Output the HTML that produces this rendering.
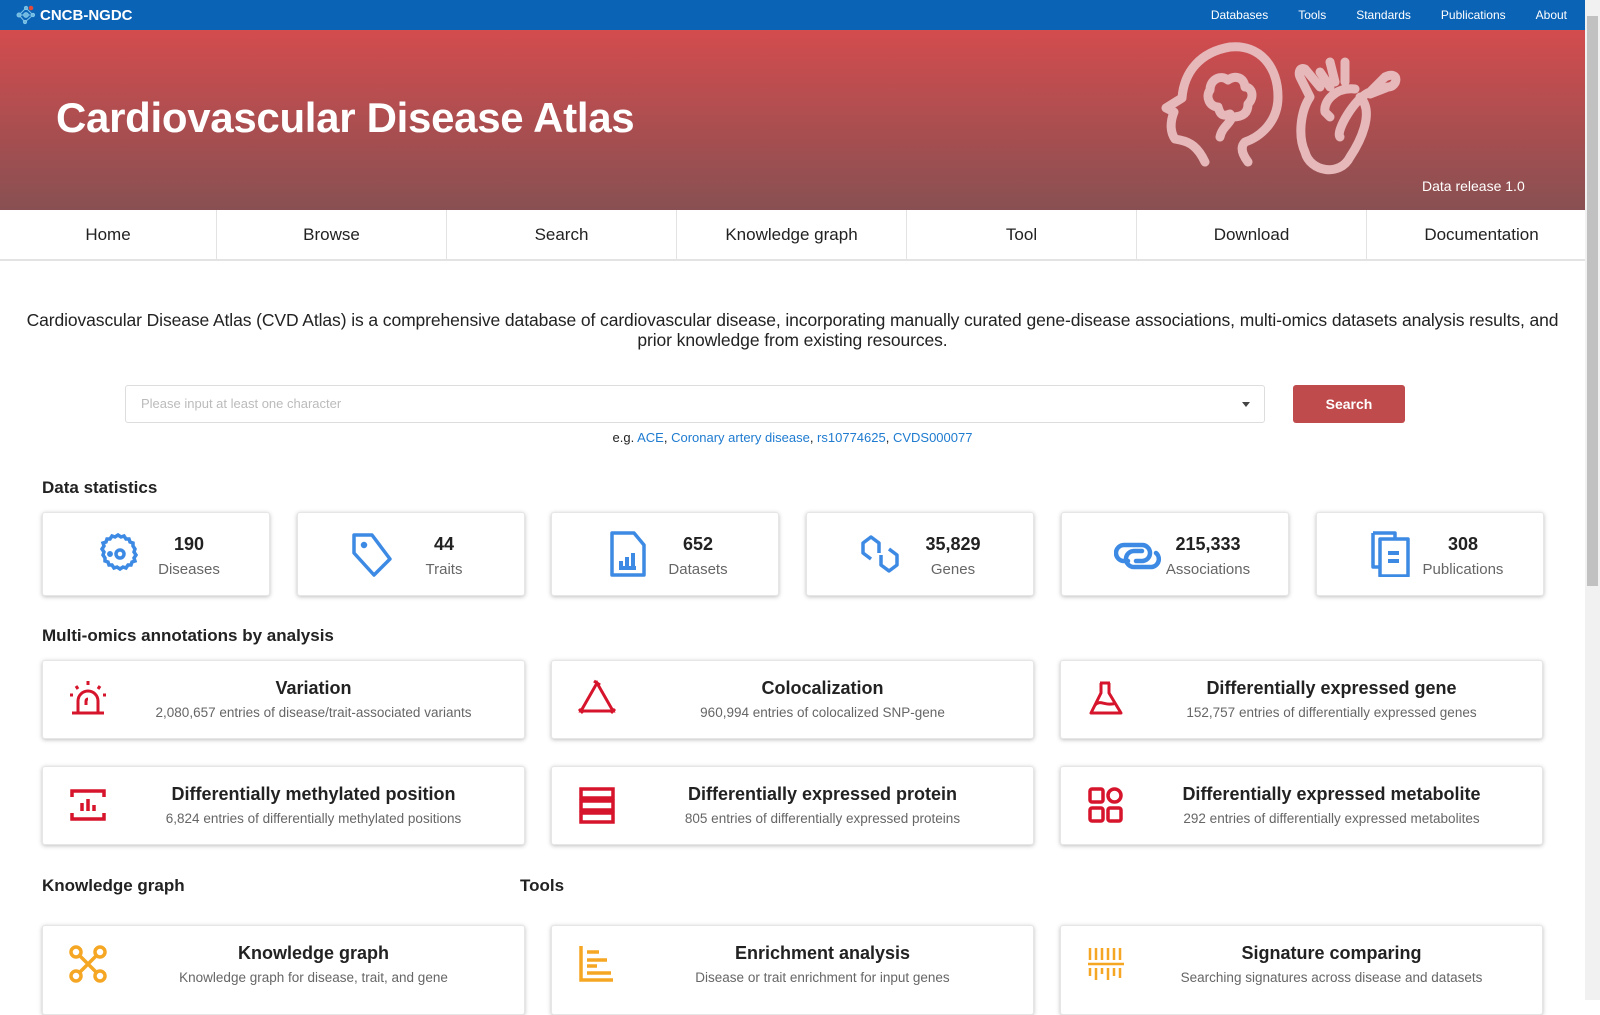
<!DOCTYPE html>
<html><head><meta charset="utf-8"><style>
*{box-sizing:border-box;margin:0;padding:0}
body{width:1600px;height:1000px;overflow:hidden;font-family:"Liberation Sans",sans-serif;color:#222;background:#fff;position:relative}
.top{position:absolute;left:0;top:0;width:1585px;height:30px;background:#0b63b6;color:#fff}
.logo{position:absolute;left:15px;top:5px;font-weight:bold;font-size:15px;display:flex;align-items:center;gap:3px}
.tlinks{position:absolute;right:0;top:0;height:30px;display:flex;font-size:12px;line-height:30px}
.tlinks span{margin-right:30px}
.banner{position:absolute;left:0;top:30px;width:1585px;height:180px;background:linear-gradient(#d34c4e,#885052)}
.banner h1{position:absolute;left:56px;top:64px;color:#fff;font-size:42px;font-weight:bold;letter-spacing:-0.3px}
.rel{position:absolute;left:1422px;top:148px;color:#fff;font-size:14px}
.nav{position:absolute;left:0;top:210px;width:1585px;height:51px;display:flex;border-bottom:2px solid #e3e3e3;overflow:hidden}
.nav div{flex:0 0 230px;text-align:center;line-height:50px;font-size:17px;border-left:1px solid #e3e3e3;color:#222}
.nav div:first-child{border-left:none;flex-basis:216px}
.desc{position:absolute;left:20px;width:1545px;top:310px;text-align:center;font-size:17.5px;line-height:20px;letter-spacing:-0.1px}
.inp{position:absolute;left:125px;top:385px;width:1140px;height:38px;border:1px solid #ddd;border-radius:3px;font-size:13px;color:#bbb;line-height:36px;padding-left:15px}
.inp:after{content:"";position:absolute;right:14px;top:16px;border:4px solid transparent;border-top:5px solid #444}
.btn{position:absolute;left:1293px;top:385px;width:112px;height:38px;background:#bf4b4c;border-radius:3px;color:#fff;font-size:14px;font-weight:bold;text-align:center;line-height:38px}
.eg{position:absolute;left:0;width:1585px;top:430px;text-align:center;font-size:13px}
.eg a{color:#1e7bd0;text-decoration:none}
h3{position:absolute;font-size:17px;font-weight:bold;color:#222}
.card{position:absolute;background:#fff;border-radius:3px;box-shadow:0 1px 4px rgba(0,0,0,.25);border:1px solid #e6e6e6}
.stat{top:512px;height:84px;width:228px}
.stat svg{position:absolute;left:52px;top:18px}
.stat .n{position:absolute;left:96px;width:100px;text-align:center;top:21px;font-size:18px;font-weight:bold;color:#222}
.stat .l{position:absolute;left:86px;width:120px;text-align:center;top:48px;font-size:15px;color:#666}
.om{width:483px;height:79px}
.om svg{position:absolute;left:25px;top:18px}
.om .t{position:absolute;left:60px;right:0;text-align:center;top:17px;font-size:18px;font-weight:bold;color:#222}
.om .s{position:absolute;left:60px;right:0;text-align:center;top:44px;font-size:13.5px;color:#666}
.sb{position:absolute;left:1585px;top:0;width:15px;height:1000px;background:#f1f1f1}
.sb div{position:absolute;left:2px;top:16px;width:11px;height:570px;background:#c1c1c1}
</style></head><body>
<div class="top">
<div class="logo"><svg width="22" height="20" viewBox="0 0 22 20"><g stroke="#7fc3e8" stroke-width="1" fill="#6fb8e0"><line x1="4" y1="10" x2="11" y2="3"/><line x1="4" y1="10" x2="10" y2="17"/><line x1="11" y1="3" x2="18" y2="10"/><line x1="10" y1="17" x2="18" y2="10"/><line x1="4" y1="10" x2="18" y2="10"/><circle cx="4" cy="10" r="2"/><circle cx="11" cy="3" r="1.6"/><circle cx="10" cy="17" r="1.6"/><circle cx="18" cy="10" r="1.6"/><circle cx="11" cy="10" r="2.4"/></g><circle cx="16" cy="3" r="2.3" fill="#e04a3a"/></svg>CNCB-NGDC</div>
<div class="tlinks"><span>Databases</span><span>Tools</span><span>Standards</span><span>Publications</span><span style="margin-right:18px">About</span></div>
</div>
<div class="banner"><h1>Cardiovascular Disease Atlas</h1>
<svg style="position:absolute;left:1160px;top:12px" width="260" height="135" viewBox="0 0 260 135" fill="none" stroke="#e6b8ba" stroke-width="9" stroke-linecap="round" stroke-linejoin="round">
<path d="M45 120 C38 105 30 100 20 98 L15 97 C10 90 10 80 14 70 L6 66 L22 56 C24 30 40 10 70 5 C100 2 118 25 118 55 C118 80 100 95 85 100 C80 105 82 112 88 120"/>
<path d="M60 95 C62 85 70 82 72 75 C80 75 88 73 88 62 C95 55 92 45 85 45 C84 35 75 33 68 38 C60 32 50 38 50 48 C45 55 50 65 58 65 C60 72 62 75 70 72"/>
<path d="M200 55 C215 70 200 100 190 115 C180 135 150 130 145 110 C138 95 140 70 150 55 L140 35 C138 30 140 25 145 27 L160 45 M160 30 L170 45 M170 20 L175 40 M185 20 L185 40 M180 95 C175 90 195 55 210 50 L225 35 C240 28 238 45 228 45 L210 52 M170 75 L165 70 C163 60 175 45 195 47"/>
</svg>
<div class="rel">Data release 1.0</div></div>
<div class="nav"><div>Home</div><div>Browse</div><div>Search</div><div>Knowledge graph</div><div>Tool</div><div>Download</div><div>Documentation</div></div>
<div class="desc">Cardiovascular Disease Atlas (CVD Atlas) is a comprehensive database of cardiovascular disease, incorporating manually curated gene-disease associations, multi-omics datasets analysis results, and prior knowledge from existing resources.</div>
<div class="inp">Please input at least one character</div>
<div class="btn">Search</div>
<div class="eg">e.g. <a>ACE</a>, <a>Coronary artery disease</a>, <a>rs10774625</a>, <a>CVDS000077</a></div>

<h3 style="left:42px;top:478px">Data statistics</h3>
<div class="card stat" style="left:42px"><svg width="46" height="46" viewBox="0 0 46 46" fill="none" stroke="#3d8ae4" stroke-width="3.5"><path d="M23 4 l3 2 3-1 2 3 3 0 1 3 3 1 0 3 2 3-1 3 2 3-2 3 1 3-3 1-1 3-3 0-2 3-3-1-3 2-3-2-3 1-2-3-3 0-1-3-3-1 0-3-2-3 1-3-2-3 2-3-1-3 3-1 1-3 3 0 2-3 3 1z"/><circle cx="25" cy="23" r="4"/><circle cx="15" cy="23" r="1.2" fill="#3d8ae4"/></svg><div class="n">190</div><div class="l">Diseases</div></div>
<div class="card stat" style="left:297px"><svg width="46" height="46" viewBox="0 0 46 46" fill="none" stroke="#3d8ae4" stroke-width="3.5" stroke-linejoin="round"><path d="M4 4 H22 L40 28 L24 44 L4 22 Z"/><circle cx="14" cy="14" r="1.5" fill="#3d8ae4"/></svg><div class="n">44</div><div class="l">Traits</div></div>
<div class="card stat" style="left:551px"><svg width="46" height="46" viewBox="0 0 46 46" fill="none" stroke="#3d8ae4" stroke-width="3.5" stroke-linejoin="round"><path d="M8 2 H30 L40 14 V44 H8 Z"/><path d="M17 36 V30 M23 36 V26 M29 36 V22 M15 37 H32" stroke-width="4"/></svg><div class="n">652</div><div class="l">Datasets</div></div>
<div class="card stat" style="left:806px"><svg width="50" height="46" viewBox="0 0 50 46" fill="none" stroke="#3d8ae4" stroke-width="3.5" stroke-linejoin="round"><path d="M20 22 V12 L12 6 L4 12 V22 L12 28"/><path d="M30 18 L38 24 V34 L30 40 L22 34 V24"/></svg><div class="n">35,829</div><div class="l">Genes</div></div>
<div class="card stat" style="left:1061px"><svg width="50" height="46" viewBox="0 0 50 46" fill="none" stroke="#3d8ae4" stroke-width="4.5" stroke-linecap="round"><path d="M14 30 H10 A8 8 0 0 1 10 14 H28 A8 8 0 0 1 28 30 H22"/><path d="M28 20 H20 A8 8 0 0 0 20 36 H38 A8 8 0 0 0 42 22"/></svg><div class="n">215,333</div><div class="l">Associations</div></div>
<div class="card stat" style="left:1316px"><svg width="46" height="46" viewBox="0 0 46 46" fill="none" stroke="#3d8ae4" stroke-width="3.5" stroke-linejoin="round"><path d="M4 2 H26 V8 M4 2 V36 H10"/><rect x="11" y="8" width="28" height="37"/><path d="M19 22 H30 M19 30 H30" stroke-width="4"/></svg><div class="n">308</div><div class="l">Publications</div></div>

<h3 style="left:42px;top:626px">Multi-omics annotations by analysis</h3>
<div class="card om" style="left:42px;top:660px"><svg width="40" height="40" viewBox="0 0 40 40" fill="none" stroke="#d6142b" stroke-width="3"><path d="M4 34 H36 M10 34 V22 A10 10 0 0 1 30 22 V34 M18 26 V22 A2 2 0 0 1 20 20"/><path d="M20 2 V6 M8 7 L10 10 M32 7 L30 10 M2 16 H5 M38 16 H35"/></svg><div class="t">Variation</div><div class="s">2,080,657 entries of disease/trait-associated variants</div></div>
<div class="card om" style="left:551px;top:660px"><svg width="40" height="40" viewBox="0 0 40 40" fill="none" stroke="#d6142b" stroke-width="3"><path d="M20 4 L36 32 H4 Z M17 2 L23 6 M2 30 L6 34 M38 30 L34 34"/></svg><div class="t">Colocalization</div><div class="s">960,994 entries of colocalized SNP-gene</div></div>
<div class="card om" style="left:1060px;top:660px"><svg width="40" height="40" viewBox="0 0 40 40" fill="none" stroke="#d6142b" stroke-width="3" stroke-linejoin="round"><path d="M14 4 H24 M15 4 V14 L5 34 H35 L23 14 V4"/><path d="M9 26 C14 20 20 28 30 24"/></svg><div class="t">Differentially expressed gene</div><div class="s">152,757 entries of differentially expressed genes</div></div>
<div class="card om" style="left:42px;top:766px"><svg width="40" height="40" viewBox="0 0 40 40" fill="none" stroke="#d6142b" stroke-width="3.5"><path d="M4 12 V6 H36 V12 M4 28 V34 H36 V28"/><path d="M14 18 V26 M20 14 V26 M26 20 V26"/></svg><div class="t">Differentially methylated position</div><div class="s">6,824 entries of differentially methylated positions</div></div>
<div class="card om" style="left:551px;top:766px"><svg width="40" height="40" viewBox="0 0 40 40" fill="none" stroke="#d6142b" stroke-width="3.5"><rect x="4" y="4" width="32" height="9"/><rect x="4" y="16" width="32" height="9"/><rect x="4" y="28" width="32" height="9"/></svg><div class="t">Differentially expressed protein</div><div class="s">805 entries of differentially expressed proteins</div></div>
<div class="card om" style="left:1060px;top:766px"><svg width="40" height="40" viewBox="0 0 40 40" fill="none" stroke="#d6142b" stroke-width="3.5"><rect x="4" y="4" width="13" height="13" rx="2"/><circle cx="28.5" cy="10.5" r="6.5"/><rect x="4" y="23" width="13" height="13" rx="2"/><rect x="22" y="23" width="13" height="13" rx="2"/></svg><div class="t">Differentially expressed metabolite</div><div class="s">292 entries of differentially expressed metabolites</div></div>

<h3 style="left:42px;top:876px">Knowledge graph</h3>
<h3 style="left:520px;top:876px">Tools</h3>
<div class="card om" style="left:42px;top:925px;height:90px"><svg width="40" height="40" viewBox="0 0 40 40" fill="none" stroke="#f5a623" stroke-width="3.5"><circle cx="8" cy="8" r="5"/><circle cx="32" cy="8" r="5"/><circle cx="8" cy="32" r="5"/><circle cx="32" cy="32" r="5"/><path d="M12 12 L28 28 M28 12 L12 28"/></svg><div class="t">Knowledge graph</div><div class="s">Knowledge graph for disease, trait, and gene</div></div>
<div class="card om" style="left:551px;top:925px;height:90px"><svg width="40" height="40" viewBox="0 0 40 40" fill="none" stroke="#f5a623" stroke-width="3.5"><path d="M4 2 V36 H36 M10 8 H22 M10 16 H30 M10 22 H20 M10 29 H34"/></svg><div class="t">Enrichment analysis</div><div class="s">Disease or trait enrichment for input genes</div></div>
<div class="card om" style="left:1060px;top:925px;height:90px"><svg width="40" height="40" viewBox="0 0 40 40" fill="none" stroke="#f5a623" stroke-width="2.5"><path d="M4 4 V16 M10 4 V16 M16 4 V16 M22 4 V16 M28 4 V16 M34 4 V16 M2 20 H38 M4 24 V32 M10 24 V36 M16 24 V30 M22 24 V36 M28 24 V32 M34 24 V34" /></svg><div class="t">Signature comparing</div><div class="s">Searching signatures across disease and datasets</div></div>
<div class="sb"><div></div></div>
</body></html>
